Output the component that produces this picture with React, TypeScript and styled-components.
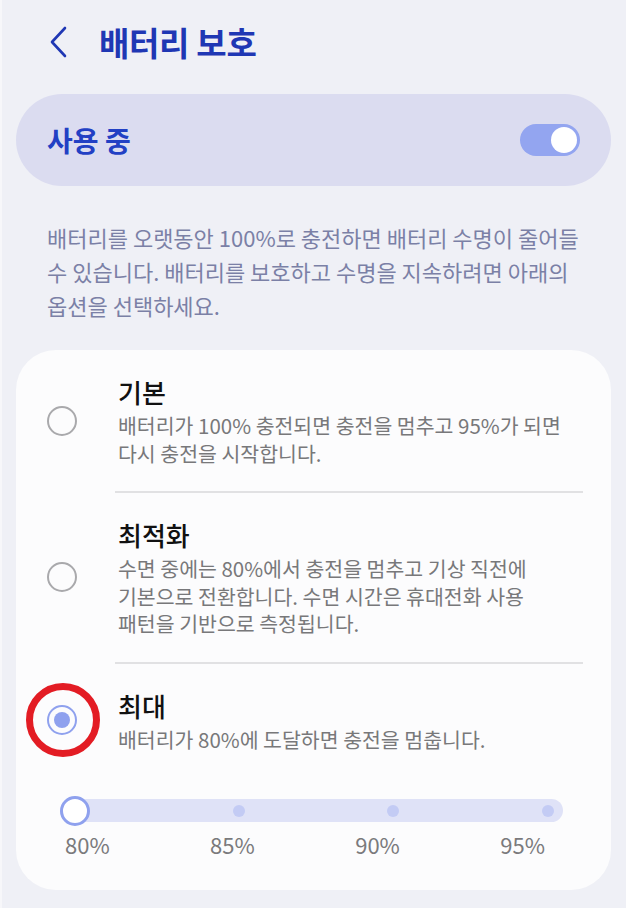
import React from 'react';
import styled, { createGlobalStyle } from 'styled-components';

const GlobalStyle = createGlobalStyle`
  html, body {
    margin: 0;
    padding: 0;
    background: #eff0f6;
  }
  body {
    font-family: "Noto Sans CJK KR", "Noto Sans", sans-serif;
    -webkit-font-smoothing: antialiased;
  }
`;

const Page = styled.div`
  width: 626px;
  height: 908px;
  box-sizing: border-box;
  padding: 0 15px 0 14px;
  border-left: 2px solid #f7f7fa;
  overflow: hidden;
`;

const Header = styled.div`
  display: flex;
  align-items: center;
  height: 84px;
  padding-left: 32px;
  gap: 31px;
`;

const BackButton = styled.button`
  border: 0;
  background: none;
  padding: 0;
  display: flex;
  align-items: center;
  cursor: pointer;
`;

const Title = styled.h1`
  margin: 0;
  font-size: 33px;
  font-weight: 700;
  color: #1f37b4;
  letter-spacing: -0.3px;
`;

const MasterPill = styled.div`
  margin-top: 10px;
  height: 92px;
  border-radius: 46px;
  background: #dbdcf0;
  display: flex;
  align-items: center;
  justify-content: space-between;
  padding: 0 31px 0 31px;
`;

const MasterLabel = styled.span`
  font-size: 28px;
  font-weight: 700;
  color: #2240c4;
`;

const Toggle = styled.div<{ $on: boolean }>`
  width: 60px;
  height: 32px;
  border-radius: 16px;
  background: ${p => (p.$on ? '#93a5f0' : '#c9c9c9')};
  display: flex;
  align-items: center;
  justify-content: ${p => (p.$on ? 'flex-end' : 'flex-start')};
  padding: 0 3px;
  box-sizing: border-box;
`;

const Knob = styled.div`
  width: 26px;
  height: 26px;
  border-radius: 50%;
  background: #ffffff;
`;

const Description = styled.p`
  margin: 34px 0 0 0;
  padding: 0 20px 0 31px;
  font-size: 22px;
  line-height: 34px;
  color: #7b80a6;
  white-space: nowrap;
`;

const OptionsCard = styled.div`
  margin-top: 28px;
  background: #fcfcfd;
  border-radius: 40px;
  padding: 0 28px 0 0;
  height: 540px;
  box-sizing: border-box;
`;

const OptionRow = styled.div`
  display: flex;
  align-items: stretch;
`;

const RadioCell = styled.div`
  width: 100px;
  flex-shrink: 0;
  display: flex;
  justify-content: center;
  align-items: center;
  position: relative;
`;

const Radio = styled.div<{ $checked: boolean }>`
  width: 30px;
  height: 30px;
  border-radius: 50%;
  box-sizing: border-box;
  border: 2px solid ${p => (p.$checked ? '#8fa1ee' : '#a9a9ac')};
  display: flex;
  align-items: center;
  justify-content: center;
  margin-left: -8px;

  &::after {
    content: '';
    display: ${p => (p.$checked ? 'block' : 'none')};
    width: 16px;
    height: 16px;
    border-radius: 50%;
    background: #8fa1ee;
  }
`;

const Highlight = styled.div`
  position: absolute;
  left: 10px;
  top: 50%;
  width: 74px;
  height: 74px;
  margin-top: -37px;
  border-radius: 50%;
  border: 7px solid #e31c24;
  box-sizing: border-box;
  pointer-events: none;
`;

const OptionBody = styled.div`
  flex: 1;
  padding: 24px 0 24px 2px;
`;

const OptionTitle = styled.div`
  font-size: 26px;
  line-height: 36px;
  color: #111111;
  font-weight: 500;
  margin-bottom: 2px;
`;

const OptionDesc = styled.div`
  font-size: 20.5px;
  line-height: 27.5px;
  color: #78787a;
  white-space: nowrap;
`;

const Divider = styled.div`
  height: 2px;
  background: #e1e1e3;
  margin-left: 99px;
`;

const SliderWrap = styled.div`
  padding: 22px 20px 0 44px;
`;

const Track = styled.div`
  height: 23px;
  border-radius: 12px;
  background: #dfe2f7;
  display: flex;
  align-items: center;
  justify-content: space-between;
  padding: 0 9px 0 0;
`;

const Tick = styled.div`
  width: 12px;
  height: 12px;
  border-radius: 50%;
  background: #c3cbf4;
`;

const Thumb = styled.div`
  width: 30px;
  height: 30px;
  border-radius: 50%;
  background: #ffffff;
  border: 3px solid #8fa1ee;
  box-sizing: border-box;
`;

const Labels = styled.div`
  display: flex;
  justify-content: space-between;
  margin-top: 9px;
  padding: 0 18px 0 5px;
`;

const Label = styled.span`
  font-size: 22px;
  line-height: 26px;
  color: #7a7a7c;
`;

type Option = { title: string; lines: string[]; checked: boolean };

const options: Option[] = [
  {
    title: '기본',
    lines: ['배터리가 100% 충전되면 충전을 멈추고 95%가 되면', '다시 충전을 시작합니다.'],
    checked: false,
  },
  {
    title: '최적화',
    lines: [
      '수면 중에는 80%에서 충전을 멈추고 기상 직전에',
      '기본으로 전환합니다. 수면 시간은 휴대전화 사용',
      '패턴을 기반으로 측정됩니다.',
    ],
    checked: false,
  },
  {
    title: '최대',
    lines: ['배터리가 80%에 도달하면 충전을 멈춥니다.'],
    checked: true,
  },
];

export default function App() {
  return (
    <>
      <GlobalStyle />
      <Page>
        <Header>
          <BackButton aria-label="뒤로">
            <svg width="20" height="32" viewBox="0 0 20 32">
              <path d="M17 2 L4 16 L17 30" fill="none" stroke="#1f37b4" strokeWidth="2.6" strokeLinecap="round" strokeLinejoin="round" />
            </svg>
          </BackButton>
          <Title>배터리 보호</Title>
        </Header>

        <MasterPill>
          <MasterLabel>사용 중</MasterLabel>
          <Toggle $on>
            <Knob />
          </Toggle>
        </MasterPill>

        <Description>
          배터리를 오랫동안 100%로 충전하면 배터리 수명이 줄어들
          <br />
          수 있습니다. 배터리를 보호하고 수명을 지속하려면 아래의
          <br />
          옵션을 선택하세요.
        </Description>

        <OptionsCard>
          {options.map((o, i) => (
            <React.Fragment key={o.title}>
              {i > 0 && <Divider />}
              <OptionRow>
                <RadioCell>
                  <Radio $checked={o.checked} />
                  {o.checked && <Highlight />}
                </RadioCell>
                <OptionBody>
                  <OptionTitle>{o.title}</OptionTitle>
                  <OptionDesc>
                    {o.lines.map((l, j) => (
                      <React.Fragment key={l}>
                        {j > 0 && <br />}
                        {l}
                      </React.Fragment>
                    ))}
                  </OptionDesc>
                </OptionBody>
              </OptionRow>
            </React.Fragment>
          ))}
          <SliderWrap>
            <Track>
              <Thumb />
              <Tick />
              <Tick />
              <Tick />
            </Track>
            <Labels>
              <Label>80%</Label>
              <Label>85%</Label>
              <Label>90%</Label>
              <Label>95%</Label>
            </Labels>
          </SliderWrap>
        </OptionsCard>
      </Page>
    </>
  );
}
